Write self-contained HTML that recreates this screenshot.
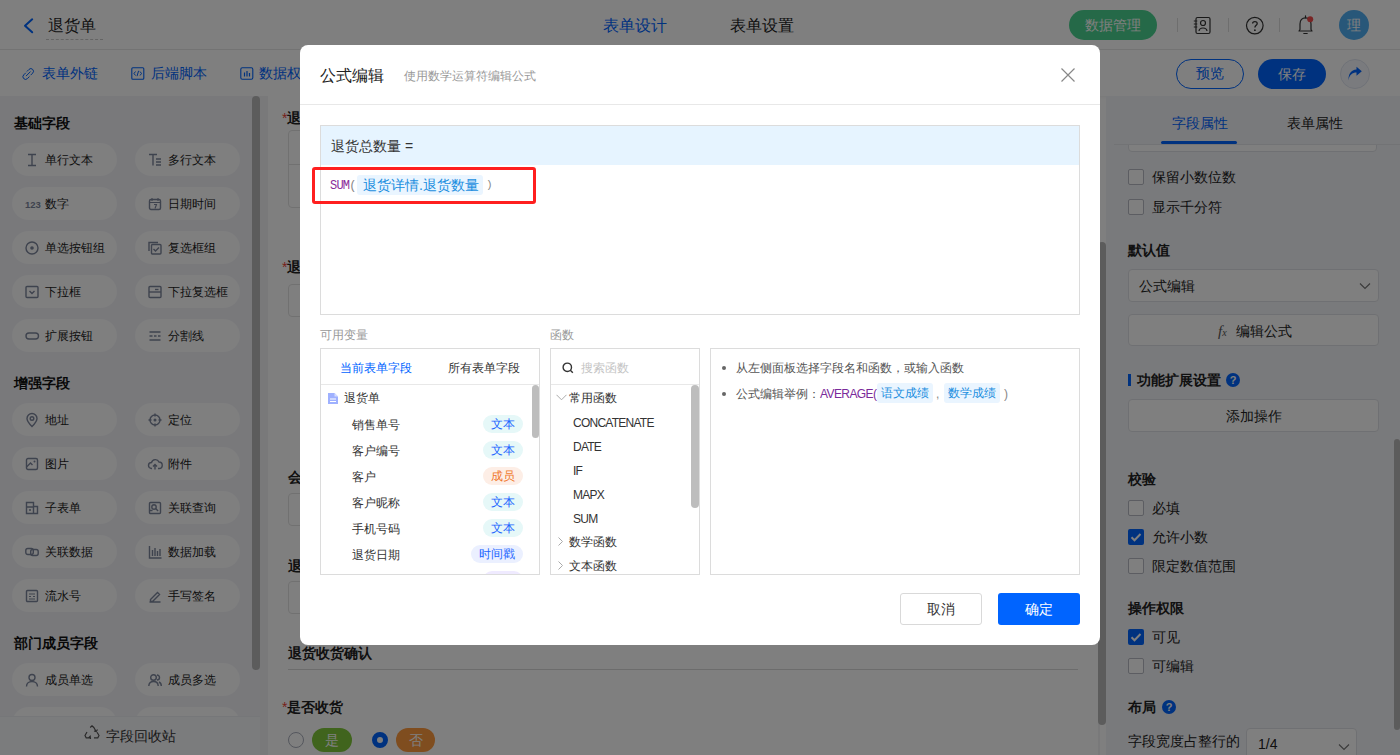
<!DOCTYPE html>
<html><head><meta charset="utf-8">
<style>
*{box-sizing:border-box;margin:0;padding:0}
html,body{width:1400px;height:755px;overflow:hidden;background:#fff;font-family:"Liberation Sans",sans-serif;color:#222;}
.a{position:absolute}
.nw{white-space:nowrap}
#hdr{left:0;top:0;width:1400px;height:50px;background:#fff;border-bottom:1px solid #e8e8e8}
#tb{left:0;top:50px;width:1400px;height:46px;background:#fff;box-shadow:0 1px 3px rgba(0,0,0,.06)}
#side{left:0;top:96px;width:260px;height:659px;background:#f2f3f7}
#main{left:260px;top:96px;width:840px;height:659px;background:#f2f3f5}
#card{left:268px;top:96px;width:830px;height:659px;background:#fff}
#rp{left:1106px;top:96px;width:294px;height:659px;background:#f3f4f8}
.chip{position:absolute;width:105px;height:33px;border-radius:17px;background:#fefeff;font-size:12px;color:#222;line-height:35px;white-space:nowrap}
.chip .ic{position:absolute;left:13px;top:10px;width:14px;height:14px;overflow:visible}
.chip .tx{position:absolute;left:33px;top:0}
.sh{position:absolute;left:14px;font-size:14px;font-weight:bold;color:#111;line-height:20px}
#ov{left:0;top:0;width:1400px;height:755px;background:rgba(0,0,0,.5)}
#modal{left:300px;top:45px;width:800px;height:600px;background:#fff;border-radius:8px}
</style></head><body>
<div id="hdr" class="a">
 <svg class="a" style="left:20px;top:16px" width="16" height="19" viewBox="0 0 16 19"><path d="M12.2 3.3 L5 9.8 L12.2 16.3" fill="none" stroke="#0064ff" stroke-width="2" stroke-linecap="round" stroke-linejoin="round"/></svg>
 <div class="a nw" style="left:48px;top:14px;font-size:16px;line-height:24px;color:#262626">退货单</div>
 <div class="a" style="left:46px;top:39px;width:57px;border-top:1px dashed #c8c8c8"></div>
 <div class="a nw" style="left:603px;top:14px;font-size:16px;line-height:24px;color:#0064ff">表单设计</div>
 <div class="a nw" style="left:730px;top:14px;font-size:16px;line-height:24px;color:#222">表单设置</div>
 <div class="a nw" style="left:1069px;top:10px;width:88px;height:30px;border-radius:15px;background:#4ad390;color:#fff;font-size:14px;line-height:30px;text-align:center">数据管理</div>
 <div class="a" style="left:1177px;top:18px;width:1px;height:14px;background:#ddd"></div>
 <div class="a" style="left:1228px;top:18px;width:1px;height:14px;background:#ddd"></div>
 <div class="a" style="left:1279px;top:18px;width:1px;height:14px;background:#ddd"></div>
 <svg class="a" style="left:1192px;top:16px" width="20" height="19" viewBox="0 0 20 19"><rect x="4" y="1.5" width="14" height="16" rx="1.5" fill="none" stroke="#333" stroke-width="1.2"/><circle cx="11" cy="7" r="2.5" fill="none" stroke="#333" stroke-width="1.2"/><path d="M7 15 C7.5 11 14.5 11 15 15" fill="none" stroke="#333" stroke-width="1.2"/><path d="M1.8 5h3.5M1.8 8h3.5M1.8 11h3.5" stroke="#333" stroke-width="1.1"/></svg>
 <svg class="a" style="left:1245px;top:16px" width="20" height="20" viewBox="0 0 20 20"><circle cx="9.8" cy="9.6" r="8.3" fill="none" stroke="#333" stroke-width="1.2"/><path d="M7.6 7.4 C7.6 4.9 12.2 4.9 12.2 7.4 C12.2 9.3 9.9 9.3 9.9 11.6" fill="none" stroke="#333" stroke-width="1.3"/><circle cx="9.9" cy="14.2" r="0.9" fill="#333"/></svg>
 <svg class="a" style="left:1296px;top:14px" width="20" height="22" viewBox="0 0 20 22"><path d="M3 17 L4 15.5 L4 10 C4 6 6.2 3.8 9.5 3.8 C12.8 3.8 15 6 15 10 L15 15.5 L16 17 Z" fill="none" stroke="#333" stroke-width="1.2" stroke-linejoin="round"/><path d="M9.5 1.8v2M7.8 19.5h3.4" stroke="#333" stroke-width="1.2" stroke-linecap="round"/><circle cx="14.2" cy="5.2" r="3" fill="#f34a4a"/></svg>
 <div class="a nw" style="left:1339px;top:10px;width:30px;height:30px;border-radius:15px;background:#50aef2;color:#fff;font-size:14px;line-height:30px;text-align:center">理</div>
</div>
<div id="tb" class="a">
 <svg class="a" style="left:21px;top:17px" width="15" height="14" viewBox="0 0 15 14"><path d="M6.2 4.2 L8 2.4 a2.6 2.6 0 0 1 3.7 3.7 L9.9 7.9 M8.2 9.8 L6.4 11.6 a2.6 2.6 0 0 1 -3.7 -3.7 L4.5 6.1 M5.3 8.8 L9.3 4.8" fill="none" stroke="#0064ff" stroke-width="1" stroke-linecap="round"/></svg>
 <div class="a nw" style="left:42px;top:13px;font-size:14px;line-height:20px;color:#0064ff">表单外链</div>
 <svg class="a" style="left:131px;top:17px" width="14" height="13" viewBox="0 0 14 13"><rect x="0.8" y="0.8" width="12" height="11.4" rx="1" fill="none" stroke="#0064ff" stroke-width="1.1"/><path d="M4.5 4.5 L3 6.5 L4.5 8.5 M9 4.5 L10.5 6.5 L9 8.5 M7.6 3.8 L6 9.2" fill="none" stroke="#0064ff" stroke-width="1"/></svg>
 <div class="a nw" style="left:151px;top:13px;font-size:14px;line-height:20px;color:#0064ff">后端脚本</div>
 <svg class="a" style="left:240px;top:17px" width="14" height="13" viewBox="0 0 14 13"><rect x="0.8" y="0.8" width="12" height="11.4" rx="1.5" fill="none" stroke="#0064ff" stroke-width="1.1"/><path d="M4.5 5.5v4M7 4v5.5M9.5 6v3.5" fill="none" stroke="#0064ff" stroke-width="1.2"/></svg>
 <div class="a nw" style="left:259px;top:13px;font-size:14px;line-height:20px;color:#0064ff">数据权限</div>
 <div class="a nw" style="left:1176px;top:9px;width:68px;height:30px;border-radius:15px;border:1.3px solid #0064ff;color:#0064ff;font-size:14px;line-height:27px;text-align:center">预览</div>
 <div class="a nw" style="left:1258px;top:9px;width:68px;height:30px;border-radius:15px;background:#0064ff;color:#fff;font-size:14px;line-height:30px;text-align:center">保存</div>
 <div class="a" style="left:1340px;top:9px;width:30px;height:30px;border-radius:15px;border:1px solid #dfe4f0;background:#f5f7fc"></div>
 <svg class="a" style="left:1346px;top:16px" width="18" height="16" viewBox="0 0 18 16"><path d="M2.5 14.5 C3 9 6.5 6.5 10.5 6.5 L10.5 9.8 L15.8 5.2 L10.5 0.8 L10.5 3.6 C5 3.8 2.2 8.5 2.5 14.5 Z" fill="#0064ff"/></svg>
</div>
<div id="side" class="a">
<div class="sh" style="top:17px">基础字段</div>
<div class="sh" style="top:277px">增强字段</div>
<div class="sh" style="top:537px">部门成员字段</div>
<div class="chip" style="left:12px;top:47px"><svg class="ic" viewBox="0 0 14 14"><path d="M3 1.5h8M3 12.5h8M7 1.5v11" stroke="#7d869c" stroke-width="1.4" fill="none"/></svg><span class="tx">单行文本</span></div>
<div class="chip" style="left:135px;top:47px"><svg class="ic" viewBox="0 0 14 14"><path d="M1 1.5h8M5 1.5v11M8 6h5M8 9h5M8 12h5" stroke="#7d869c" stroke-width="1.4" fill="none"/></svg><span class="tx">多行文本</span></div>
<div class="chip" style="left:12px;top:91px"><svg class="ic" viewBox="0 0 14 14"><text x="0" y="11" font-size="9.5" font-weight="bold" fill="#7d869c" font-family="Liberation Sans">123</text></svg><span class="tx">数字</span></div>
<div class="chip" style="left:135px;top:91px"><svg class="ic" viewBox="0 0 14 14"><rect x="1.5" y="2.5" width="11" height="10" rx="1.5" stroke="#7d869c" stroke-width="1.4" fill="none"/><path d="M4 1v3M10 1v3M1.5 5.5h11M6 7.5h2.5l-1.5 4" stroke="#7d869c" stroke-width="1.1" fill="none"/></svg><span class="tx">日期时间</span></div>
<div class="chip" style="left:12px;top:135px"><svg class="ic" viewBox="0 0 14 14"><circle cx="7" cy="7" r="6" stroke="#7d869c" stroke-width="1.4" fill="none"/><circle cx="7" cy="7" r="1.8" fill="#7d869c"/></svg><span class="tx">单选按钮组</span></div>
<div class="chip" style="left:135px;top:135px"><svg class="ic" viewBox="0 0 14 14"><path d="M1 10V1.5h9" stroke="#7d869c" stroke-width="1.4" fill="none"/><rect x="3.5" y="3.5" width="9.5" height="9.5" rx="1" stroke="#7d869c" stroke-width="1.4" fill="none"/><path d="M5.5 8l2 2 3.5-3.5" stroke="#7d869c" stroke-width="1.4" fill="none"/></svg><span class="tx">复选框组</span></div>
<div class="chip" style="left:12px;top:179px"><svg class="ic" viewBox="0 0 14 14"><rect x="1" y="1.5" width="12" height="11" rx="1" stroke="#7d869c" stroke-width="1.4" fill="none"/><path d="M4.5 6l2.5 2.5 2.5-2.5" stroke="#7d869c" stroke-width="1.4" fill="none"/></svg><span class="tx">下拉框</span></div>
<div class="chip" style="left:135px;top:179px"><svg class="ic" viewBox="0 0 14 14"><rect x="1" y="1.5" width="12" height="11" rx="1" stroke="#7d869c" stroke-width="1.4" fill="none"/><path d="M1 7h12" stroke="#7d869c" stroke-width="1.4" fill="none"/><path d="M7 4.5h3.5" stroke="#7d869c" stroke-width="1.4" fill="none"/></svg><span class="tx">下拉复选框</span></div>
<div class="chip" style="left:12px;top:223px"><svg class="ic" viewBox="0 0 14 14"><rect x="1" y="4" width="12.5" height="6" rx="3" stroke="#7d869c" stroke-width="1.4" fill="none"/></svg><span class="tx">扩展按钮</span></div>
<div class="chip" style="left:135px;top:223px"><svg class="ic" viewBox="0 0 14 14"><path d="M1.5 3h11M1.5 11h11M1.5 7h3M6 7h2.5M10 7h2.5" stroke="#7d869c" stroke-width="1.4" fill="none"/></svg><span class="tx">分割线</span></div>
<div class="chip" style="left:12px;top:307px"><svg class="ic" viewBox="0 0 14 14"><path d="M7 13.5 C3 9.5 2 7.5 2 5.5 a5 5 0 0 1 10 0 c0 2 -1 4 -5 8z" stroke="#7d869c" stroke-width="1.4" fill="none"/><circle cx="7" cy="5.5" r="1.8" stroke="#7d869c" stroke-width="1.4" fill="none"/></svg><span class="tx">地址</span></div>
<div class="chip" style="left:135px;top:307px"><svg class="ic" viewBox="0 0 14 14"><circle cx="7" cy="7" r="5" stroke="#7d869c" stroke-width="1.4" fill="none"/><circle cx="7" cy="7" r="1.5" fill="#7d869c"/><path d="M7 0.5v3M7 10.5v3M0.5 7h3M10.5 7h3" stroke="#7d869c" stroke-width="1.4" fill="none"/></svg><span class="tx">定位</span></div>
<div class="chip" style="left:12px;top:351px"><svg class="ic" viewBox="0 0 14 14"><rect x="1.5" y="1.5" width="11" height="11" rx="1.5" stroke="#7d869c" stroke-width="1.4" fill="none"/><path d="M1.5 10l4-4 2 2" stroke="#7d869c" stroke-width="1.4" fill="none"/><circle cx="9.5" cy="4.5" r="1" fill="#7d869c"/></svg><span class="tx">图片</span></div>
<div class="chip" style="left:135px;top:351px"><svg class="ic" viewBox="0 0 14 14"><path d="M4 11.5 H3.5 a3 3 0 0 1 0-6 a4 4 0 0 1 7.5-0.5 a3 3 0 0 1 0 6.5 H10 M7 12.5V7.5 M5 9.5l2-2 2 2" stroke="#7d869c" stroke-width="1.4" fill="none"/></svg><span class="tx">附件</span></div>
<div class="chip" style="left:12px;top:395px"><svg class="ic" viewBox="0 0 14 14"><path d="M1.5 12.5V1.5h7v11zM8.5 5.5h4v7h-4M1.5 6h7M4 9h2" stroke="#7d869c" stroke-width="1.4" fill="none"/></svg><span class="tx">子表单</span></div>
<div class="chip" style="left:135px;top:395px"><svg class="ic" viewBox="0 0 14 14"><rect x="1.5" y="1.5" width="11" height="11" rx="1" stroke="#7d869c" stroke-width="1.4" fill="none"/><circle cx="6" cy="6" r="2.2" stroke="#7d869c" stroke-width="1.4" fill="none"/><path d="M7.6 7.6l2.5 2.5M1.5 9.5h3" stroke="#7d869c" stroke-width="1.4" fill="none"/></svg><span class="tx">关联查询</span></div>
<div class="chip" style="left:12px;top:439px"><svg class="ic" viewBox="0 0 14 14"><rect x="0.8" y="3.5" width="7.5" height="6" rx="2" stroke="#7d869c" stroke-width="1.4" fill="none"/><rect x="5.7" y="4.5" width="7.5" height="6" rx="2" stroke="#7d869c" stroke-width="1.4" fill="none"/></svg><span class="tx">关联数据</span></div>
<div class="chip" style="left:135px;top:439px"><svg class="ic" viewBox="0 0 14 14"><path d="M1.5 1v12h12M4.5 5v6M7 3v8M9.5 6v5M12 4v7" stroke="#7d869c" stroke-width="1.4" fill="none"/></svg><span class="tx">数据加载</span></div>
<div class="chip" style="left:12px;top:483px"><svg class="ic" viewBox="0 0 14 14"><rect x="1.5" y="1.5" width="11" height="11" rx="1" stroke="#7d869c" stroke-width="1.4" fill="none"/><path d="M4 5h6M4 7.5h2M8 7.5h2M4 10h6" stroke="#7d869c" stroke-width="1.1" fill="none"/></svg><span class="tx">流水号</span></div>
<div class="chip" style="left:135px;top:483px"><svg class="ic" viewBox="0 0 14 14"><path d="M2.5 10.5l7-7 2 2-7 7H2.5zM1.5 13h11" stroke="#7d869c" stroke-width="1.4" fill="none"/></svg><span class="tx">手写签名</span></div>
<div class="chip" style="left:12px;top:567px"><svg class="ic" viewBox="0 0 14 14"><circle cx="7" cy="4.5" r="3" stroke="#7d869c" stroke-width="1.4" fill="none"/><path d="M1.5 13.5c0-3 2.5-5 5.5-5s5.5 2 5.5 5" stroke="#7d869c" stroke-width="1.4" fill="none"/></svg><span class="tx">成员单选</span></div>
<div class="chip" style="left:135px;top:567px"><svg class="ic" viewBox="0 0 14 14"><circle cx="5.5" cy="4.5" r="2.8" stroke="#7d869c" stroke-width="1.4" fill="none"/><path d="M0.8 13c0-3 2-4.5 4.7-4.5s4.7 1.5 4.7 4.5M9 2a2.5 2.5 0 0 1 0 5M11 9c1.5 0.7 2.3 2 2.3 4" stroke="#7d869c" stroke-width="1.4" fill="none"/></svg><span class="tx">成员多选</span></div>
<div class="chip" style="left:12px;top:611px"><svg class="ic" viewBox="0 0 14 14"><circle cx="7" cy="4.5" r="3" stroke="#7d869c" stroke-width="1.4" fill="none"/><path d="M1.5 13.5c0-3 2.5-5 5.5-5s5.5 2 5.5 5" stroke="#7d869c" stroke-width="1.4" fill="none"/></svg><span class="tx">部门单选</span></div>
<div class="chip" style="left:135px;top:611px"><svg class="ic" viewBox="0 0 14 14"><circle cx="5.5" cy="4.5" r="2.8" stroke="#7d869c" stroke-width="1.4" fill="none"/><path d="M0.8 13c0-3 2-4.5 4.7-4.5s4.7 1.5 4.7 4.5M9 2a2.5 2.5 0 0 1 0 5M11 9c1.5 0.7 2.3 2 2.3 4" stroke="#7d869c" stroke-width="1.4" fill="none"/></svg><span class="tx">部门多选</span></div>
<div class="a" style="left:252px;top:0;width:8px;height:574px;border-radius:4px;background:#b9b9b9"></div>
<div class="a" style="left:0;top:620px;width:260px;height:39px;background:#f7f8fb;border-top:1px solid #eceef3"></div>
<svg class="a" style="left:84px;top:629px" width="16" height="16" viewBox="0 0 16 16"><path d="M6.2 2.5 L8 0.8 L9.8 2.5 L12 6.3 M13.5 4.5 L12.2 6.5 L10 6 M3 7 L1 10.5 L2.2 12.8 H6 M4.5 13 L6.2 11.3 L6.5 14 M10 12.8 H13.8 L15 10.5 L13 7.2" fill="none" stroke="#555" stroke-width="1.2"/></svg>
<div class="a nw" style="left:106px;top:630px;font-size:14px;line-height:20px;color:#333">字段回收站</div>
</div>
<div id="main" class="a"></div>
<div id="card" class="a">
 <div class="a nw" style="left:14px;top:12px;font-size:14px;line-height:20px;color:#222;font-weight:bold"><span style="color:#f04134;font-weight:normal">*</span>退货详情</div>
 <div class="a" style="left:20px;top:34px;width:790px;height:78px;border:1px solid #e3e3e3;border-radius:4px"></div>
 <div class="a" style="left:20px;top:68px;width:790px;height:1px;background:#e3e3e3"></div>
 <div class="a nw" style="left:14px;top:161px;font-size:14px;line-height:20px;color:#222;font-weight:bold"><span style="color:#f04134;font-weight:normal">*</span>退货原因</div>
 <div class="a" style="left:20px;top:188px;width:790px;height:33px;border:1px solid #e3e3e3;border-radius:4px"></div>
 <div class="a nw" style="left:20px;top:371px;font-size:14px;line-height:20px;color:#222;font-weight:bold">会员等级</div>
 <div class="a" style="left:20px;top:397px;width:790px;height:33px;border:1px solid #e3e3e3;border-radius:4px"></div>
 <div class="a nw" style="left:20px;top:460px;font-size:14px;line-height:20px;color:#222;font-weight:bold">退货总数量</div>
 <div class="a" style="left:20px;top:485px;width:790px;height:33px;border:1px solid #e3e3e3;border-radius:4px"></div>
 <div class="a nw" style="left:20px;top:547px;font-size:14px;line-height:20px;color:#222;font-weight:bold">退货收货确认</div>
 <div class="a" style="left:20px;top:573px;width:790px;height:1px;background:#d9d9d9"></div>
 <div class="a nw" style="left:14px;top:601px;font-size:14px;line-height:20px;color:#222;font-weight:bold"><span style="color:#f04134;font-weight:normal">*</span>是否收货</div>
 <div class="a" style="left:20px;top:636px;width:16px;height:16px;border-radius:8px;border:1.3px solid #a9aebb;background:#fff"></div>
 <div class="a nw" style="left:44px;top:632px;width:40px;height:24px;border-radius:12px;background:#80c83a;color:#fff;font-size:14px;line-height:24px;text-align:center">是</div>
 <div class="a" style="left:104px;top:636px;width:16px;height:16px;border-radius:8px;border:5px solid #0064ff;background:#fff"></div>
 <div class="a nw" style="left:128px;top:632px;width:39px;height:24px;border-radius:12px;background:#ff9a3e;color:#fff;font-size:14px;line-height:24px;text-align:center">否</div>
</div>
<div class="a" style="left:1098px;top:242px;width:8px;height:483px;border-radius:4px;background:#b9b9b9"></div>
<div id="rp" class="a">
<div class="a" style="left:22px;top:21px;width:249px;height:35px;border:1px solid #dfe1e6;border-radius:4px;background:#fff"></div>
<div class="a" style="left:0;top:0;width:294px;height:49px;background:#f3f4f8"></div>
<div class="a nw" style="left:66px;top:17px;font-size:14px;line-height:20px;color:#0064ff">字段属性</div><div class="a nw" style="left:181px;top:17px;font-size:14px;line-height:20px;color:#222">表单属性</div>
<div class="a" style="left:55px;top:45px;width:76px;height:3px;border-radius:2px;background:#0064ff"></div>
<div class="a" style="left:8px;top:48px;width:286px;height:1px;background:#e4e6eb"></div>
<div class="a" style="left:22px;top:73px;width:16px;height:16px;border-radius:2px;border:1px solid #b8bbc4;background:#fff"></div><div class="a nw" style="left:46px;top:71px;font-size:14px;line-height:20px;color:#222">保留小数位数</div>
<div class="a" style="left:22px;top:103px;width:16px;height:16px;border-radius:2px;border:1px solid #b8bbc4;background:#fff"></div><div class="a nw" style="left:46px;top:101px;font-size:14px;line-height:20px;color:#222">显示千分符</div>
<div class="a nw" style="left:22px;top:144px;font-size:14px;line-height:20px;color:#222;font-weight:bold">默认值</div>
<div class="a" style="left:22px;top:173px;width:251px;height:33px;border:1px solid #dfe1e6;border-radius:4px;background:#fff"></div><div class="a nw" style="left:33px;top:180px;font-size:14px;line-height:20px;color:#222">公式编辑</div><svg class="a" style="left:253px;top:186px" width="12" height="8" viewBox="0 0 12 8"><path d="M1 1.5l5 5 5-5" fill="none" stroke="#777" stroke-width="1.2"/></svg>
<div class="a" style="left:22px;top:218px;width:251px;height:32px;border:1px solid #dfe1e6;border-radius:4px;background:#fff"></div><div class="a nw" style="left:112px;top:225px;font-size:15px;line-height:20px;color:#555;font-family:'Liberation Serif',serif;font-style:italic">f<span style="font-size:10px">x</span></div><div class="a nw" style="left:130px;top:225px;font-size:14px;line-height:20px;color:#222">编辑公式</div>
<div class="a" style="left:22px;top:278px;width:3px;height:12px;background:#0064ff"></div><div class="a nw" style="left:31px;top:274px;font-size:14px;line-height:20px;color:#222;font-weight:bold">功能扩展设置</div><div class="a" style="left:120px;top:277px;width:14px;height:14px;border-radius:7px;background:#0064ff;color:#fff;font-size:11px;line-height:14px;text-align:center;font-weight:bold">?</div>
<div class="a" style="left:22px;top:303px;width:251px;height:33px;border:1px solid #dfe1e6;border-radius:4px;background:#fff"></div><div class="a nw" style="left:120px;top:310px;font-size:14px;line-height:20px;color:#222">添加操作</div>
<div class="a nw" style="left:22px;top:373px;font-size:14px;line-height:20px;color:#222;font-weight:bold">校验</div>
<div class="a" style="left:22px;top:404px;width:16px;height:16px;border-radius:2px;border:1px solid #b8bbc4;background:#fff"></div><div class="a nw" style="left:46px;top:402px;font-size:14px;line-height:20px;color:#222">必填</div>
<div class="a" style="left:22px;top:433px;width:16px;height:16px;border-radius:2px;background:#0064ff"><svg class="a" style="left:0;top:0" width="16" height="16" viewBox="0 0 16 16"><path d="M3.5 8.2l3 3 6-6.2" fill="none" stroke="#fff" stroke-width="2"/></svg></div><div class="a nw" style="left:46px;top:431px;font-size:14px;line-height:20px;color:#222">允许小数</div>
<div class="a" style="left:22px;top:462px;width:16px;height:16px;border-radius:2px;border:1px solid #b8bbc4;background:#fff"></div><div class="a nw" style="left:46px;top:460px;font-size:14px;line-height:20px;color:#222">限定数值范围</div>
<div class="a nw" style="left:22px;top:502px;font-size:14px;line-height:20px;color:#222;font-weight:bold">操作权限</div>
<div class="a" style="left:22px;top:533px;width:16px;height:16px;border-radius:2px;background:#0064ff"><svg class="a" style="left:0;top:0" width="16" height="16" viewBox="0 0 16 16"><path d="M3.5 8.2l3 3 6-6.2" fill="none" stroke="#fff" stroke-width="2"/></svg></div><div class="a nw" style="left:46px;top:531px;font-size:14px;line-height:20px;color:#222">可见</div>
<div class="a" style="left:22px;top:562px;width:16px;height:16px;border-radius:2px;border:1px solid #b8bbc4;background:#fff"></div><div class="a nw" style="left:46px;top:560px;font-size:14px;line-height:20px;color:#222">可编辑</div>
<div class="a nw" style="left:22px;top:601px;font-size:14px;line-height:20px;color:#222;font-weight:bold">布局</div><div class="a" style="left:56px;top:604px;width:14px;height:14px;border-radius:7px;background:#0064ff;color:#fff;font-size:11px;line-height:14px;text-align:center;font-weight:bold">?</div>
<div class="a nw" style="left:22px;top:635px;font-size:14px;line-height:20px;color:#222">字段宽度占整行的</div><div class="a" style="left:140px;top:632px;width:111px;height:33px;border:1px solid #dfe1e6;border-radius:4px;background:#fff"></div><div class="a nw" style="left:152px;top:638px;font-size:14px;line-height:20px;color:#222">1/4</div><svg class="a" style="left:232px;top:647px" width="12" height="8" viewBox="0 0 12 8"><path d="M1 1.5l5 5 5-5" fill="none" stroke="#777" stroke-width="1.2"/></svg>
<div class="a" style="left:288px;top:343px;width:6px;height:291px;border-radius:3px;background:#b9b9b9"></div>
</div>
<div id="ov" class="a"></div>
<div id="modal" class="a">
<div class="a nw" style="left:20px;top:21px;font-size:16px;line-height:20px;color:#222;">公式编辑</div>
<div class="a nw" style="left:104px;top:21px;font-size:12px;line-height:20px;color:#999;">使用数学运算符编辑公式</div>
<svg class="a" style="left:760px;top:22px" width="16" height="16" viewBox="0 0 16 16"><path d="M1.5 1.5l13 13M14.5 1.5l-13 13" stroke="#888" stroke-width="1.2"/></svg>
<div class="a" style="left:0;top:59px;width:800px;height:1px;background:#e8e8e8"></div>
<div class="a" style="left:20px;top:80px;width:760px;height:190px;border:1px solid #dcdcdc;background:#fff"></div>
<div class="a" style="left:21px;top:81px;width:758px;height:39px;background:#e6f4ff"></div>
<div class="a nw" style="left:31px;top:91px;font-size:14px;line-height:20px;color:#333;">退货总数量 =</div>
<div class="a nw" style="left:30px;top:132px;font-family:'Liberation Mono',monospace;font-size:12px;letter-spacing:-0.8px;line-height:18px;color:#8a2b9a">SUM<span style="color:#888">(</span></div>
<div class="a nw" style="left:57px;top:130px;width:126px;height:20px;border-radius:3px;background:#eaf5ff;color:#1a8ee0;font-size:14px;line-height:20px;padding-left:6px">退货详情.退货数量</div>
<div class="a nw" style="left:186px;top:131px;font-family:'Liberation Mono',monospace;font-size:11px;line-height:18px;color:#888">)</div>
<div class="a" style="left:12px;top:122px;width:224px;height:37px;border:3px solid #ff1f1f;border-radius:3px"></div>
<div class="a nw" style="left:20px;top:280px;font-size:12px;line-height:20px;color:#999;">可用变量</div>
<div class="a nw" style="left:250px;top:280px;font-size:12px;line-height:20px;color:#999;">函数</div>
<div class="a" style="left:20px;top:303px;width:220px;height:227px;border:1px solid #dcdcdc;background:#fff;overflow:hidden"><div class="a nw" style="left:19px;top:9px;font-size:12px;line-height:20px;color:#0064ff;">当前表单字段</div><div class="a nw" style="left:127px;top:9px;font-size:12px;line-height:20px;color:#333;">所有表单字段</div><div class="a" style="left:0;top:35px;width:218px;height:1px;background:#e8e8e8"></div><svg class="a" style="left:7px;top:44px" width="10" height="11" viewBox="0 0 10 11"><path d="M0 0h6.5l3.5 3.5v7.5h-10z" fill="#9fb1ff"/><path d="M6.5 0v3.5h3.5" fill="#d6ddff"/><path d="M2 6h6M2 8.5h6" stroke="#fff" stroke-width="1"/></svg><div class="a nw" style="left:23px;top:39px;font-size:12px;line-height:20px;color:#333;">退货单</div><div class="a nw" style="left:31px;top:65.5px;font-size:12px;line-height:20px;color:#333;">销售单号</div><div class="a nw" style="left:162px;top:66px;width:40px;height:18px;border-radius:9px;background:#e6f8f8;color:#2266ff;font-size:12px;line-height:18px;text-align:center">文本</div><div class="a nw" style="left:31px;top:91.5px;font-size:12px;line-height:20px;color:#333;">客户编号</div><div class="a nw" style="left:162px;top:92px;width:40px;height:18px;border-radius:9px;background:#e6f8f8;color:#2266ff;font-size:12px;line-height:18px;text-align:center">文本</div><div class="a nw" style="left:31px;top:117.5px;font-size:12px;line-height:20px;color:#333;">客户</div><div class="a nw" style="left:162px;top:118px;width:40px;height:18px;border-radius:9px;background:#fdeee6;color:#f0782a;font-size:12px;line-height:18px;text-align:center">成员</div><div class="a nw" style="left:31px;top:143.5px;font-size:12px;line-height:20px;color:#333;">客户昵称</div><div class="a nw" style="left:162px;top:144px;width:40px;height:18px;border-radius:9px;background:#e6f8f8;color:#2266ff;font-size:12px;line-height:18px;text-align:center">文本</div><div class="a nw" style="left:31px;top:169.5px;font-size:12px;line-height:20px;color:#333;">手机号码</div><div class="a nw" style="left:162px;top:170px;width:40px;height:18px;border-radius:9px;background:#e6f8f8;color:#2266ff;font-size:12px;line-height:18px;text-align:center">文本</div><div class="a nw" style="left:31px;top:195.5px;font-size:12px;line-height:20px;color:#333;">退货日期</div><div class="a nw" style="left:150px;top:196px;width:52px;height:18px;border-radius:9px;background:#ebf0ff;color:#2266ff;font-size:12px;line-height:18px;text-align:center">时间戳</div><div class="a nw" style="left:31px;top:221.5px;font-size:12px;line-height:20px;color:#333;">退货原因</div><div class="a nw" style="left:162px;top:222px;width:40px;height:18px;border-radius:9px;background:#efeaff;color:#7755dd;font-size:12px;line-height:18px;text-align:center">文本</div><div class="a" style="left:211px;top:36px;width:7px;height:53px;border-radius:3.5px;background:#bdbdbd"></div></div>
<div class="a" style="left:250px;top:303px;width:150px;height:227px;border:1px solid #dcdcdc;background:#fff;overflow:hidden"><svg class="a" style="left:11px;top:13px" width="12" height="12" viewBox="0 0 12 12"><circle cx="5.3" cy="5.3" r="4.2" fill="none" stroke="#333" stroke-width="1.4"/><path d="M8.3 8.3l2.5 2.5" stroke="#333" stroke-width="1.4"/></svg><div class="a nw" style="left:30px;top:9px;font-size:12px;line-height:20px;color:#c4c4c4;">搜索函数</div><div class="a" style="left:0;top:35px;width:148px;height:1px;background:#e8e8e8"></div><svg class="a" style="left:5px;top:45px" width="11" height="7" viewBox="0 0 11 7"><path d="M0.5 0.8l5 5 5-5" fill="none" stroke="#aaa" stroke-width="1"/></svg><div class="a nw" style="left:18px;top:39px;font-size:12px;line-height:20px;color:#333;">常用函数</div><div class="a nw" style="left:22px;top:64px;font-size:12px;line-height:20px;color:#333;letter-spacing:-0.75px">CONCATENATE</div><div class="a nw" style="left:22px;top:88px;font-size:12px;line-height:20px;color:#333;letter-spacing:-0.75px">DATE</div><div class="a nw" style="left:22px;top:112px;font-size:12px;line-height:20px;color:#333;letter-spacing:-0.75px">IF</div><div class="a nw" style="left:22px;top:136px;font-size:12px;line-height:20px;color:#333;letter-spacing:-0.75px">MAPX</div><div class="a nw" style="left:22px;top:160px;font-size:12px;line-height:20px;color:#333;letter-spacing:-0.75px">SUM</div><svg class="a" style="left:7px;top:188px" width="5" height="9" viewBox="0 0 5 9"><path d="M0.5 0.5l4 4-4 4" fill="none" stroke="#aaa" stroke-width="1"/></svg><div class="a nw" style="left:18px;top:183px;font-size:12px;line-height:20px;color:#333;">数学函数</div><svg class="a" style="left:7px;top:212px" width="5" height="9" viewBox="0 0 5 9"><path d="M0.5 0.5l4 4-4 4" fill="none" stroke="#aaa" stroke-width="1"/></svg><div class="a nw" style="left:18px;top:207px;font-size:12px;line-height:20px;color:#333;">文本函数</div><div class="a" style="left:140px;top:36px;width:8px;height:123px;border-radius:4px;background:#bdbdbd"></div></div>
<div class="a" style="left:410px;top:303px;width:370px;height:227px;border:1px solid #dcdcdc;background:#fff"><div class="a" style="left:11px;top:17px;width:4px;height:4px;border-radius:2px;background:#666"></div><div class="a nw" style="left:25px;top:9px;font-size:12px;line-height:20px;color:#555;">从左侧面板选择字段名和函数，或输入函数</div><div class="a" style="left:11px;top:43px;width:4px;height:4px;border-radius:2px;background:#666"></div><div class="a nw" style="left:25px;top:35px;font-size:12px;line-height:20px;color:#555;">公式编辑举例：<span style="color:#7a2a9a;letter-spacing:-0.6px">AVERAGE(</span></div><div class="a nw" style="left:166px;top:34px;width:56px;height:20px;border-radius:3px;background:#eaf5ff;color:#1a8ee0;font-size:12px;line-height:20px;text-align:center">语文成绩</div><div class="a nw" style="left:225px;top:35px;font-size:12px;line-height:20px;color:#888;">,</div><div class="a nw" style="left:233px;top:34px;width:56px;height:20px;border-radius:3px;background:#eaf5ff;color:#1a8ee0;font-size:12px;line-height:20px;text-align:center">数学成绩</div><div class="a nw" style="left:293px;top:35px;font-size:12px;line-height:20px;color:#888;">)</div></div>
<div class="a nw" style="left:600px;top:548px;width:82px;height:32px;border:1px solid #d9d9d9;border-radius:3px;background:#fff;color:#333;font-size:14px;line-height:30px;text-align:center">取消</div>
<div class="a nw" style="left:698px;top:548px;width:82px;height:32px;border-radius:3px;background:#0064ff;color:#fff;font-size:14px;line-height:32px;text-align:center">确定</div>
</div>
</body></html>
